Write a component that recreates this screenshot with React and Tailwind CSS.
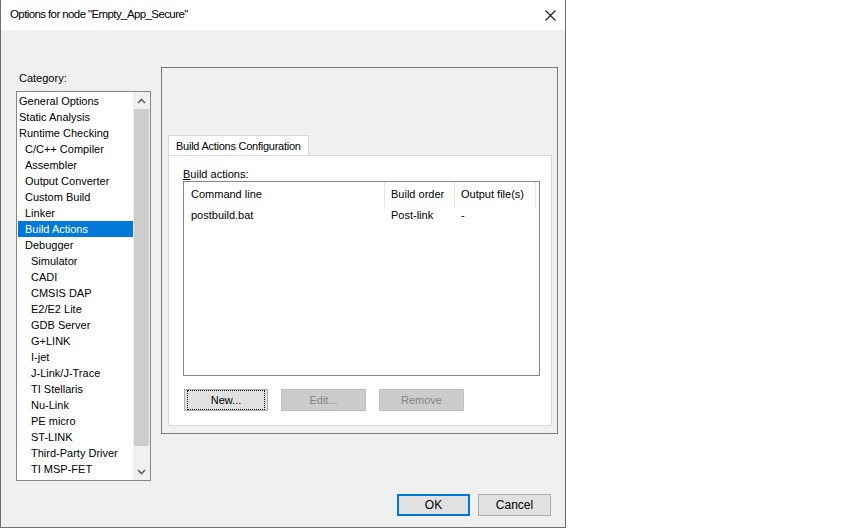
const categories = [
  ["General Options", 0],
  ["Static Analysis", 0],
  ["Runtime Checking", 0],
  ["C/C++ Compiler", 1],
  ["Assembler", 1],
  ["Output Converter", 1],
  ["Custom Build", 1],
  ["Linker", 1],
  ["Build Actions", 1],
  ["Debugger", 1],
  ["Simulator", 2],
  ["CADI", 2],
  ["CMSIS DAP", 2],
  ["E2/E2 Lite", 2],
  ["GDB Server", 2],
  ["G+LINK", 2],
  ["I-jet", 2],
  ["J-Link/J-Trace", 2],
  ["TI Stellaris", 2],
  ["Nu-Link", 2],
  ["PE micro", 2],
  ["ST-LINK", 2],
  ["Third-Party Driver", 2],
  ["TI MSP-FET", 2],
];

const indent = ["pl-[1px]", "pl-[7px]", "pl-[13px]"];

const WinButton = ({ children, disabled, focused, width = "w-[85px]" }) => (
  <div
    className={`${width} h-[22px] flex items-center justify-center border ${
      disabled
        ? "bg-[#cccccc] border-[#bfbfbf] text-[#838383]"
        : "bg-[#e1e1e1] border-[#adadad] text-black"
    }`}
  >
    {focused ? (
      <div className="w-full h-full m-[2px] border border-dotted border-black flex items-center justify-center">
        {children}
      </div>
    ) : (
      children
    )}
  </div>
);

export default function App() {
  return (
    <div
      className="w-[850px] h-[528px] bg-white text-[11px] text-black"
      style={{ fontFamily: '"Liberation Sans", Arial, sans-serif' }}
    >
      <div className="w-[566px] h-[528px] border-l border-r border-b border-[#6e6e6e] flex flex-col bg-[#f0f0f0]">
        {/* title bar */}
        <div className="h-[30px] bg-white flex items-center justify-between pl-[9px] pr-[9px] shrink-0">
          <span className="text-[11.5px] tracking-[-0.6px]">Options for node "Empty_App_Secure"</span>
          <svg width="11" height="11" viewBox="0 0 11 11">
            <path d="M0.5 0.5 L10.5 10.5 M10.5 0.5 L0.5 10.5" stroke="#1a1a1a" strokeWidth="1.1" />
          </svg>
        </div>

        {/* body */}
        <div className="flex flex-1 pt-[37px] pl-[15px]">
          {/* category */}
          <div className="w-[135px] mt-[3px]">
            <div className="h-[16px] leading-[16px] pl-[3px]">Category:</div>
            <div className="mt-[5px] h-[390px] border border-[#828790] bg-white flex">
              <div className="flex-1 pt-[1px]">
                {categories.map(([name, lvl]) => (
                  <div
                    key={name}
                    className={`h-[16px] leading-[16px] ml-[1px] ${indent[lvl]} whitespace-nowrap ${
                      name === "Build Actions" ? "bg-[#0078d7] text-white" : ""
                    }`}
                  >
                    {name}
                  </div>
                ))}
              </div>
              <div className="w-[17px] bg-[#f0f0f0] flex flex-col">
                <div className="h-[17px] flex items-center justify-center">
                  <svg width="9" height="6" viewBox="0 0 9 6">
                    <path d="M1 5 L4.5 1.5 L8 5" fill="none" stroke="#606060" strokeWidth="1.6" />
                  </svg>
                </div>
                <div className="h-[337px] mx-[1px] bg-[#cdcdcd]" />
                <div className="flex-1" />
                <div className="h-[17px] flex items-center justify-center">
                  <svg width="9" height="6" viewBox="0 0 9 6">
                    <path d="M1 1 L4.5 4.5 L8 1" fill="none" stroke="#606060" strokeWidth="1.6" />
                  </svg>
                </div>
              </div>
            </div>
          </div>

          {/* options panel */}
          <div className="ml-[10px] flex flex-col">
            <div className="w-[397px] h-[367px] border border-[#7a7a7a] pl-[6px] pr-[5px] pt-[67px] pb-[7px] flex flex-col">
              <div className="flex">
                <div className="h-[21px] pl-[7px] pr-[7px] bg-white border border-b-0 border-[#d9d9d9] flex items-center tracking-[-0.25px]">
                  Build Actions Configuration
                </div>
              </div>
              <div className="flex-1 -mt-[1px] bg-white border border-[#d9d9d9] pl-[14px] pr-[11px] pt-[11px]">
                <div className="h-[14px] leading-[14px]">
                  <span className="underline">B</span>uild actions:
                </div>
                <div className="h-[195px] border border-[#828790] bg-white">
                  <div className="flex h-[25px] items-center">
                    <div className="w-[201px] h-full pl-[7px] flex items-center border-r border-[#e5e5e5]">
                      Command line
                    </div>
                    <div className="w-[70px] h-full pl-[6px] flex items-center border-r border-[#e5e5e5]">
                      Build order
                    </div>
                    <div className="w-[81px] h-full pl-[6px] flex items-center border-r border-[#e5e5e5]">
                      Output file(s)
                    </div>
                  </div>
                  <div className="flex h-[17px] items-center">
                    <div className="w-[201px] pl-[7px]">postbuild.bat</div>
                    <div className="w-[70px] pl-[6px]">Post-link</div>
                    <div className="w-[81px] pl-[6px]">-</div>
                  </div>
                </div>
                <div className="mt-[13px] flex gap-[13px] pl-[1px]">
                  <WinButton focused width="w-[84px]">New...</WinButton>
                  <WinButton disabled>Edit...</WinButton>
                  <WinButton disabled>Remove</WinButton>
                </div>
              </div>
            </div>
          </div>
        </div>

        {/* footer */}
        <div className="h-[22px] shrink-0 flex justify-end gap-[8px] pr-[14px] mb-[11px]">
          <div className="w-[73px] h-[22px] bg-[#e1e1e1] border-2 border-[#0078d7] flex items-center justify-center text-[12px]">
            OK
          </div>
          <div className="w-[73px] h-[22px] bg-[#e1e1e1] border border-[#adadad] flex items-center justify-center text-[12px]">
            Cancel
          </div>
        </div>
      </div>
    </div>
  );
}
